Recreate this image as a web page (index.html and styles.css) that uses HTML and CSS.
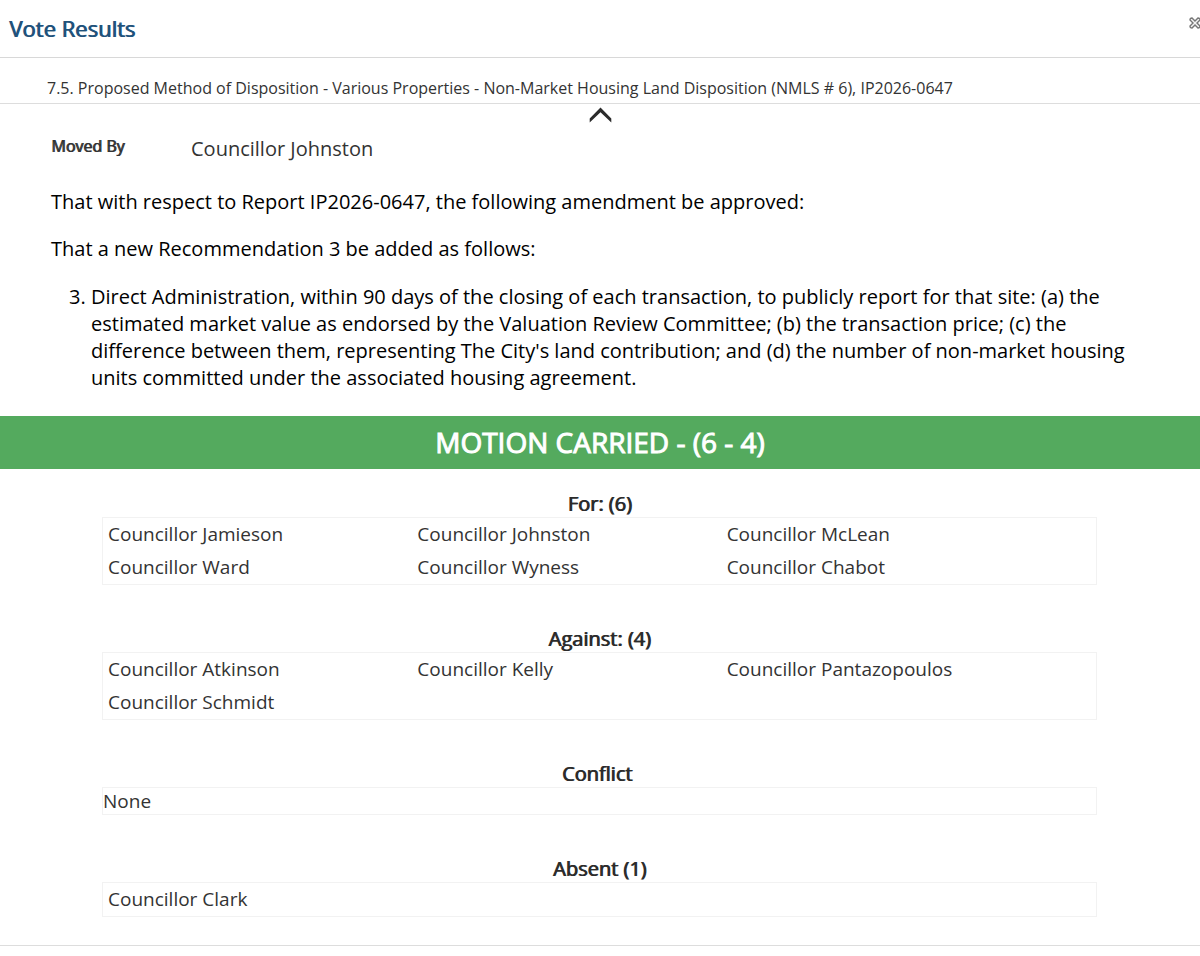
FILE: index.html
```html
<!DOCTYPE html>
<html lang="en">
<head>
<meta charset="utf-8">
<title>Vote Results</title>
<link rel="stylesheet" href="styles.css">
</head>
<body>
<main class="dialog">
  <header class="header">
    <h1 class="title">Vote Results</h1>
    <button class="close" type="button" aria-label="Close">
      <svg viewBox="0 0 12 12" width="12" height="12"><path d="M1 3Q1 1 3 1L6 4 9 1Q11 1 11 3L8 6 11 9Q11 11 9 11L6 8 3 11Q1 11 1 9L4 6Z" fill="#f4f4f4" stroke="#777" stroke-width="1.4"/></svg>
    </button>
  </header>
  <div class="item">7.5. Proposed Method of Disposition - Various Properties - Non-Market Housing Land Disposition (NMLS # 6), IP2026-0647</div>
  <button class="toggle" type="button" aria-label="Collapse">
    <svg viewBox="0 0 24 16" width="24" height="16"><path d="M12.500 .5 23.300 11.500V15.500L12.500 5.300 1.700 15.500V11.500Z" fill="#2b2b2b"/></svg>
  </button>
  <section class="motion">
    <dl class="mover"><dt>Moved By</dt><dd>Councillor Johnston</dd></dl>
    <p>That with respect to Report IP2026-0647, the following amendment be approved:</p>
    <p>That a new Recommendation 3 be added as follows:</p>
    <ol class="clauses" start="3">
      <li>Direct Administration, within 90 days of the closing of each transaction, to publicly report for that site: (a) the estimated market value as endorsed by the Valuation Review Committee; (b) the transaction price; (c) the difference between them, representing The City's land contribution; and (d) the number of non-market housing units committed under the associated housing agreement.</li>
    </ol>
  </section>
  <div class="result">MOTION CARRIED - (6 - 4)</div>
  <section class="votes">
    <h2>For: (6)</h2>
    <ul class="names"><li>Councillor Jamieson</li><li>Councillor Johnston</li><li>Councillor McLean</li><li>Councillor Ward</li><li>Councillor Wyness</li><li>Councillor Chabot</li></ul>
    <h2>Against: (4)</h2>
    <ul class="names"><li>Councillor Atkinson</li><li>Councillor Kelly</li><li>Councillor Pantazopoulos</li><li>Councillor Schmidt</li></ul>
    <h2>Conflict&nbsp;</h2>
    <div class="none">None</div>
    <h2>Absent (1)</h2>
    <ul class="names"><li>Councillor Clark</li></ul>
  </section>
</main>
</body>
</html>
```
FILE: styles.css
```css
* { box-sizing: border-box; }
body { margin: 0; background: #fff; color: #333; font-family: "Open Sans", sans-serif; font-size: 19px; line-height: 27px; }
button { padding: 0; border: 0; background: none; cursor: pointer; }
svg { display: block; }
.dialog { border-bottom: 1px solid #ddd; padding-bottom: 28px; overflow-x: clip; }
.header { display: flex; justify-content: space-between; align-items: flex-start; padding: 15px 0 16px 9px; border-bottom: 1px solid #d8d8d8; }
.title { margin: 0; color: #1f527b; font-size: 22px; line-height: 26px; font-weight: 400; text-shadow: 1px 0 0 #1f527b; }
.close { margin: 2px -1px 0 0; }
.item { padding: 18px 47px 3px; border-bottom: 1px solid #ddd; font-size: 16px; line-height: 24px; }
.toggle { display: block; margin: 3px auto 0; }
.motion { padding: 11px 51px 0; color: #000; font-size: 20px; }
.mover { display: flex; margin: 0; color: #333; line-height: 30px; }
.mover dt { width: 140px; font-size: 16px; line-height: 24px; text-shadow: 1px 0 0 #333; }
.mover dd { margin: 0; }
.motion p { margin: 20px 0; }
.motion .mover + p { margin-top: 24px; }
.motion .clauses { margin: 21px 0 0; padding-left: 40px; }
.result { margin-top: 25px; padding: 8px; background: #54aa5e; color: #fff; font-size: 28px; line-height: 37px; text-align: center; -webkit-text-stroke: 1px #fff; }
.votes { padding: 21px 103px 0 102px; }
.votes h2 { margin: 0; color: #2b2b2b; font-size: 20px; line-height: 27px; font-weight: 400; text-align: center; text-shadow: 1px 0 0 #2b2b2b; }
.names { display: grid; grid-template-columns: repeat(3, 1fr); margin: 0; padding: 0 60px 0 5px; border: 1px solid #f2f2f2; list-style: none; line-height: 33px; }
.none { border: 1px solid #f2f2f2; line-height: 26px; }
.votes .names + h2, .votes .none + h2 { margin-top: 40px; }
```
